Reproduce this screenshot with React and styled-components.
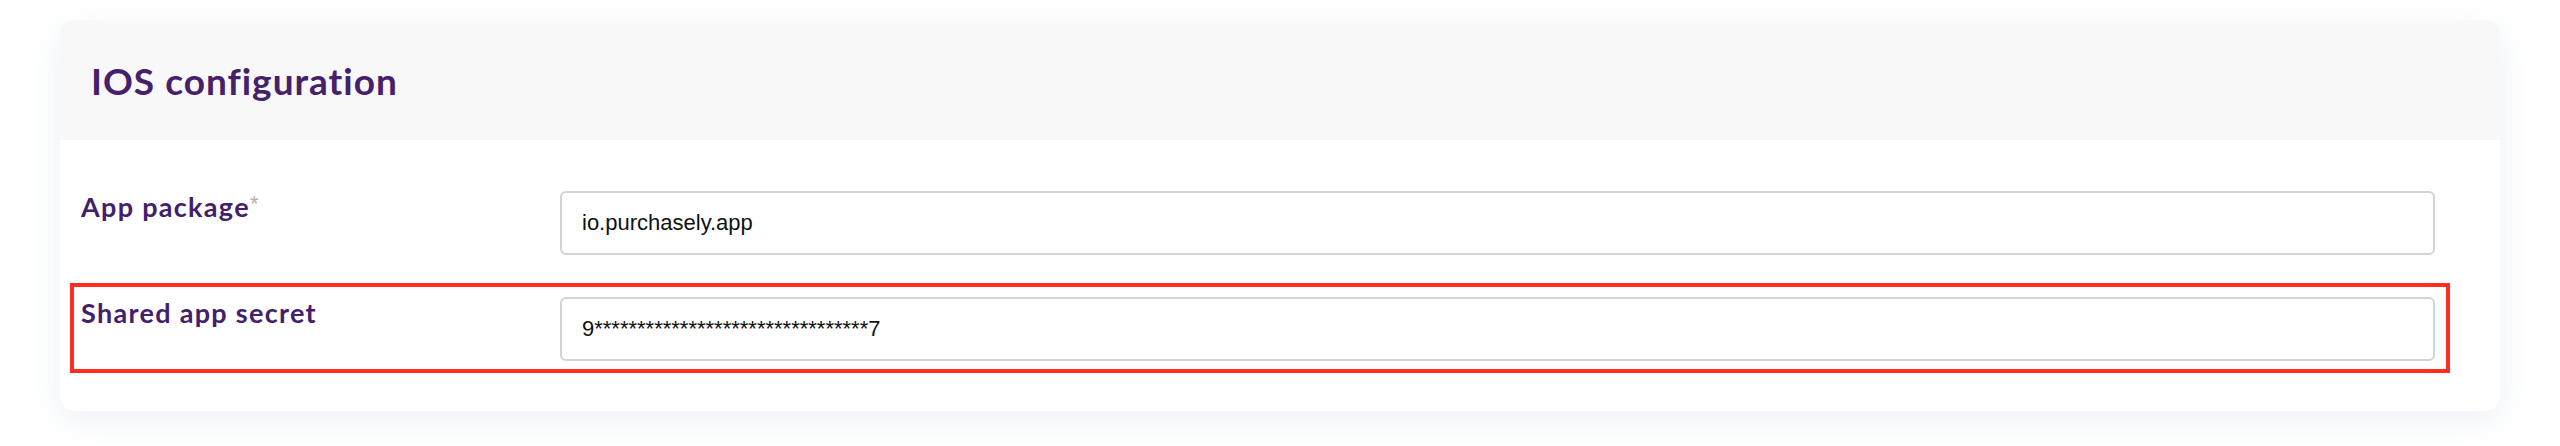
import styled, { createGlobalStyle } from "styled-components";

const GlobalStyle = createGlobalStyle`
  body {
    margin: 0;
    background: #ffffff;
    font-family: "Lato", "Liberation Sans", sans-serif;
  }
`;

const Page = styled.div`
  padding: 20px 60px 35px 60px;
`;

const Card = styled.section`
  background: #ffffff;
  border-radius: 15px;
  overflow: hidden;
  box-shadow: 0 10px 34px rgba(170, 195, 225, 0.22);
`;

const Header = styled.div`
  height: 120px;
  display: flex;
  align-items: center;
  padding-left: 31px;
  background: #f8f8f8;
`;

const Title = styled.h2`
  margin: 0;
  font-family: "Lato", sans-serif;
  font-weight: 700;
  font-size: 37px;
  letter-spacing: 1px;
  color: #45206b;
`;

const Body = styled.div`
  display: flex;
  flex-direction: column;
  gap: 16px;
  padding: 37px 50px 38px 10px;
`;

const Row = styled.div`
  display: grid;
  grid-template-columns: 479px 1fr;
  padding: 10px 11px 8px 7px;
  border: 4px solid ${(p) => (p.$highlight ? "#ff2d20" : "transparent")};
`;

const Label = styled.label`
  font-family: "Lato", sans-serif;
  font-weight: 700;
  font-size: 27px;
  letter-spacing: 1.3px;
  line-height: 1;
  padding-top: 2px;
  color: #42216a;
`;

const Required = styled.sup`
  font-family: "Liberation Sans", sans-serif;
  font-size: 22px;
  line-height: 0;
  color: #adadad;
  font-weight: 400;
  letter-spacing: 0;
  position: relative;
  top: 4px;
`;

const Input = styled.input`
  box-sizing: border-box;
  height: 64px;
  width: 100%;
  border: 2px solid #cfd4d9;
  border-radius: 6px;
  padding: 0 20px;
  font-family: "Liberation Sans", Arial, sans-serif;
  font-size: 22px;
  color: #111111;
  background: #ffffff;
  outline: none;
`;

const fields = [
  { label: "App package", value: "io.purchasely.app", required: true },
  { label: "Shared app secret", value: "9" + "*".repeat(32) + "7", highlight: true },
];

export default function App() {
  return (
    <>
      <GlobalStyle />
      <Page>
        <Card>
          <Header>
            <Title>IOS configuration</Title>
          </Header>
          <Body>
            {fields.map((f) => (
              <Row key={f.label} $highlight={f.highlight}>
                <Label>
                  {f.label}
                  {f.required && <Required>*</Required>}
                </Label>
                <Input defaultValue={f.value} readOnly />
              </Row>
            ))}
          </Body>
        </Card>
      </Page>
    </>
  );
}
